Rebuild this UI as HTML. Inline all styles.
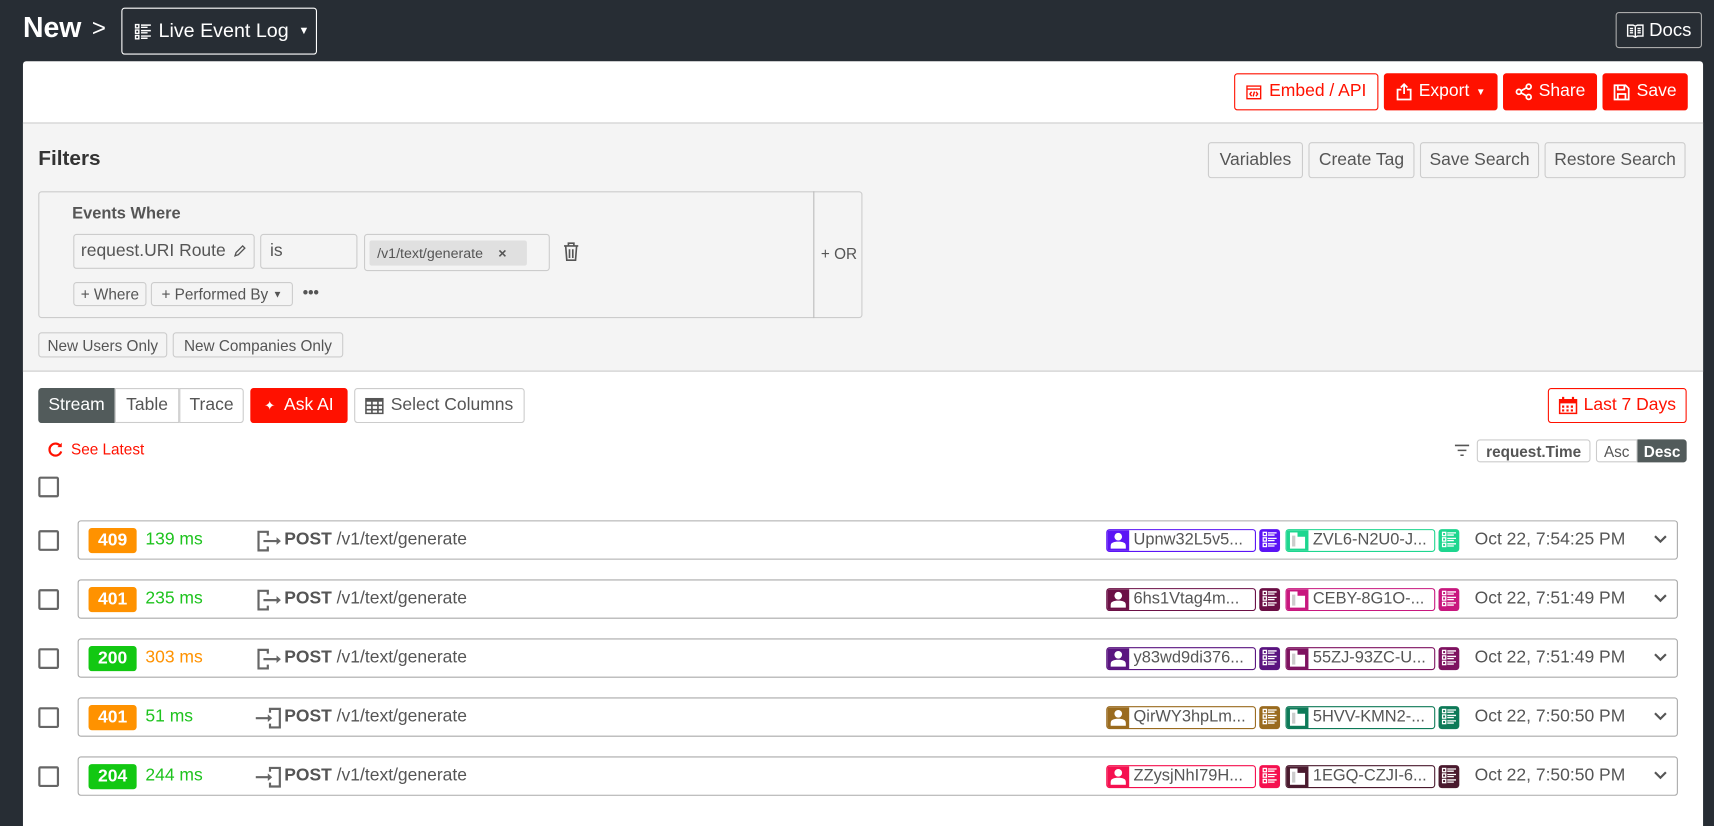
<!DOCTYPE html>
<html><head><meta charset="utf-8"><style>
*{box-sizing:border-box;margin:0;padding:0}
html,body{width:1714px;height:807px;overflow:hidden;background:#272d34;font-family:"Liberation Sans",sans-serif}
#s{position:absolute;left:0;top:0;width:1568px;height:738px;transform:scale(1.09311);transform-origin:0 0}
.a{position:absolute}
.btn{position:absolute;display:flex;align-items:center;justify-content:center;border:1px solid #ccc;border-radius:3px;font-size:16px;color:#555;background:#f4f4f4;white-space:nowrap}
.red{background:#ff1100;color:#fff;border-color:#ff1100}
.ored{background:#fff;color:#ff1100;border-color:#ff1100}
.sm{font-size:14px}
.row{position:absolute;left:71px;width:1464px;height:36px;border:1px solid #aaa;border-radius:3px;background:#fff}
.cb{position:absolute;left:35px;width:19px;height:19px;border:2px solid #666;border-radius:2px;background:#fff}
.badge{position:absolute;left:9px;top:6px;width:44px;height:23px;border-radius:3px;color:#fff;font-size:16px;font-weight:bold;display:flex;align-items:center;justify-content:center}
.ms{position:absolute;left:61px;top:8px;font-size:16px}
.path{position:absolute;left:163px;top:8px;font-size:16px;color:#555}
.chip{position:absolute;top:7px;height:21px;width:137px;border:1.5px solid;border-radius:3px;font-size:15px;color:#555;padding-left:24px;line-height:18px;white-space:nowrap;overflow:hidden}
.chip i{position:absolute;left:0;top:0;width:20px;height:100%}
.chip svg,.li svg{position:absolute;left:3px;top:2px}
.li{position:absolute;top:7px;width:19px;height:21px;border-radius:3px}
.date{position:absolute;left:1277px;top:8px;font-size:16px;color:#555}
.chev{position:absolute;left:1440px;top:9px}
</style></head><body><div id="s">
<svg width="0" height="0" style="position:absolute"><defs>
<symbol id="u" viewBox="0 0 14 15"><circle cx="7" cy="4" r="3.5" fill="#fff"/><path d="M0 15v-2.5C0 9.5 3 8.5 7 8.5s7 1 7 4V15z" fill="#fff"/></symbol>
<symbol id="c" viewBox="0 0 14 15"><path d="M0 0h7v4h7v11H0z" fill="#fff"/><path d="M2 3h3v10H2z" fill="#0003"/></symbol>
<symbol id="l" viewBox="0 0 13 15"><g fill="none" stroke="#fff" stroke-width="1.2"><rect x=".6" y="1" width="3" height="3"/><rect x=".6" y="6" width="3" height="3"/><rect x=".6" y="11" width="3" height="3"/></g><path d="M5 1.5h8M5 3.5h6M5 6.5h8M5 8.5h6M5 11.5h8M5 13.5h6" stroke="#fff" stroke-width="1.2"/></symbol>
</defs></svg>
<div class="a" style="left:21px;top:10px;font-size:26px;font-weight:bold;color:#fff">New</div>
<div class="a" style="left:84px;top:13px;font-size:22px;color:#fff">&gt;</div>
<div class="a" style="left:111px;top:7px;width:179px;height:43px;border:1px solid #fff;border-radius:3px;color:#fff;font-size:18px;display:flex;align-items:center;padding-left:11px">
<svg width="16" height="16" viewBox="0 0 16 16" fill="none" stroke="#fff" stroke-width="1.3"><rect x="1" y="1.5" width="3" height="3"/><rect x="1" y="6.5" width="3" height="3"/><rect x="1" y="11.5" width="3" height="3"/><path d="M6 2h9M6 4h6M6 7h9M6 9h6M6 12h9M6 14h6"/></svg>
<span style="margin-left:6px">Live Event Log</span><span style="margin-left:9px;font-size:10px">▼</span></div>
<div class="a" style="left:1478px;top:11px;width:79px;height:33px;border:1px solid #aaa;border-radius:3px;color:#fff;font-size:17px;display:flex;align-items:center;justify-content:center;gap:5px">
<svg width="16" height="14" viewBox="0 0 16 14" fill="none" stroke="#fff" stroke-width="1.3"><path d="M1 2h5l2 1 2-1h5v10h-5l-2 1-2-1H1zM8 3v10M3 5h3M3 7h3M3 9h3M10 5h3M10 7h3M10 9h3"/></svg>Docs</div>
<div class="a" style="left:21px;top:56px;width:1537px;height:700px;background:#fff;border-radius:3px 3px 0 0"></div>
<div class="a" style="left:21px;top:112px;width:1537px;height:228px;background:#f4f4f4;border-top:1px solid #ccc;border-bottom:1px solid #ccc"></div>
<div class="btn ored" style="left:1129px;top:67px;width:132px;height:34px;gap:7px"><svg width="14" height="13" viewBox="0 0 14 13" fill="none" stroke="#ff1100" stroke-width="1.3"><rect x=".7" y=".7" width="12.6" height="11.6"/><path d="M1 3.5h12M5 6l-1.5 2L5 10M9 6l1.5 2L9 10M7.6 5.8l-1.2 4.4"/></svg>Embed / API</div>
<div class="btn red" style="left:1266px;top:67px;width:104px;height:34px;gap:6px"><svg width="15" height="16" viewBox="0 0 15 16" fill="none" stroke="#fff" stroke-width="1.6"><path d="M5 6H1.5v9h12V6H10M7.5 10V1M4.5 4l3-3 3 3"/></svg>Export<span style="font-size:9px">▼</span></div>
<div class="btn red" style="left:1375px;top:67px;width:86px;height:34px;gap:6px"><svg width="16" height="16" viewBox="0 0 16 16" fill="none" stroke="#fff" stroke-width="1.6"><circle cx="3.5" cy="8" r="2.2"/><circle cx="12.5" cy="3.3" r="2.2"/><circle cx="12.5" cy="12.7" r="2.2"/><path d="M5.5 7l5-2.7M5.5 9l5 2.7"/></svg>Share</div>
<div class="btn red" style="left:1466px;top:67px;width:78px;height:34px;gap:6px"><svg width="15" height="15" viewBox="0 0 15 15" fill="none" stroke="#fff" stroke-width="1.6"><path d="M1 1h10l3 3v10H1zM4 1v4h6V1M4 14V9h7v5"/></svg>Save</div>
<div class="a" style="left:35px;top:135px;font-size:19px;font-weight:bold;color:#333">Filters</div>
<div class="btn" style="left:1105px;top:130px;width:87px;height:33px">Variables</div>
<div class="btn" style="left:1197px;top:130px;width:97px;height:33px">Create Tag</div>
<div class="btn" style="left:1299px;top:130px;width:109px;height:33px">Save Search</div>
<div class="btn" style="left:1413px;top:130px;width:129px;height:33px">Restore Search</div>
<div class="a" style="left:35px;top:175px;width:754px;height:116px;border:1px solid #ccc;border-radius:3px"></div>
<div class="a" style="left:744px;top:175px;width:1px;height:116px;background:#bbb"></div>
<div class="a" style="left:751px;top:224px;font-size:14px;color:#555">+ OR</div>
<div class="a" style="left:66px;top:187px;font-size:15px;font-weight:bold;color:#555">Events Where</div>
<div class="btn" style="left:67px;top:214px;width:166px;height:32px;justify-content:flex-start;padding-left:6px;gap:6px">request.URI Route<svg width="12" height="12" viewBox="0 0 12 12" fill="none" stroke="#555" stroke-width="1.2"><path d="M2 10l1-3 6-6 2 2-6 6zM2 10l3-1"/></svg></div>
<div class="btn" style="left:238px;top:214px;width:89px;height:32px;justify-content:flex-start;padding-left:8px">is</div>
<div class="btn" style="left:333px;top:214px;width:170px;height:34px;justify-content:flex-start;padding-left:4px"><div style="background:#e0e0e0;border-radius:2px;height:23px;width:144px;font-size:13px;display:flex;align-items:center;padding-left:7px">/v1/text/generate<span style="margin-left:14px;font-weight:bold">×</span></div></div>
<svg class="a" style="left:515px;top:221px" width="15" height="18" viewBox="0 0 15 18" fill="none" stroke="#555" stroke-width="1.5"><path d="M1 4h13M5 4V1.5h5V4M2.5 4l1 13h8l1-13M6 7v8M9 7v8"/></svg>
<div class="btn sm" style="left:67px;top:258px;width:67px;height:22px">+ Where</div>
<div class="btn sm" style="left:138px;top:258px;width:130px;height:22px;gap:4px">+ Performed By<span style="font-size:9px">▼</span></div>
<div class="a" style="left:277px;top:259px;font-size:14px;color:#555;font-weight:bold">•••</div>
<div class="btn sm" style="left:35px;top:304px;width:118px;height:23px">New Users Only</div>
<div class="btn sm" style="left:158px;top:304px;width:156px;height:23px">New Companies Only</div>
<div class="btn" style="left:35px;top:355px;width:70px;height:32px;background:#525b5b;color:#fff;border-color:#525b5b;border-radius:3px 0 0 3px">Stream</div>
<div class="btn" style="left:105px;top:355px;width:59px;height:32px;background:#fff;border-radius:0">Table</div>
<div class="btn" style="left:164px;top:355px;width:59px;height:32px;background:#fff;border-radius:0 3px 3px 0">Trace</div>
<div class="btn red" style="left:229px;top:355px;width:89px;height:32px;gap:8px"><span style="font-size:12px">✦</span>Ask AI</div>
<div class="btn" style="left:324px;top:355px;width:156px;height:32px;background:#fff;gap:6px"><svg width="17" height="15" viewBox="0 0 17 15" fill="#555"><path d="M0 0h17v15H0zM1.5 3.5v2.5h4V3.5zm5.5 0v2.5h4V3.5zm5.5 0v2.5h3V3.5zM1.5 7.5V10h4V7.5zm5.5 0V10h4V7.5zm5.5 0V10h3V7.5zM1.5 11.5v2h4v-2zm5.5 0v2h4v-2zm5.5 0v2h3v-2z"/></svg>Select Columns</div>
<div class="btn ored" style="left:1416px;top:355px;width:127px;height:32px;gap:6px"><svg width="17" height="16" viewBox="0 0 17 16" fill="#ff1100"><path d="M0 2h17v14H0zM1.5 6v8.5h14V6zM3 0h2v4H3zM12 0h2v4h-2zM3 8h2v2H3zm4 0h2v2H7zm4 0h2v2h-2zM3 11.5h2v2H3zm4 0h2v2H7zm4 0h2v2h-2z"/></svg>Last 7 Days</div>
<svg class="a" style="left:44px;top:404px" width="14" height="14" viewBox="0 0 14 14" fill="none" stroke="#ff1100" stroke-width="2"><path d="M11.5 4.5A5.5 5.5 0 1 0 12 9"/><path d="M12.5 1v4h-4" fill="#ff1100" stroke="none"/></svg>
<div class="a" style="left:65px;top:403px;font-size:14px;color:#ff1100">See Latest</div>
<svg class="a" style="left:1330px;top:406px" width="15" height="12" viewBox="0 0 15 12" stroke="#555" stroke-width="1.4"><path d="M1 1.5h13M3.5 6h8M6 10.5h3"/></svg>
<div class="btn sm" style="left:1351px;top:402px;width:104px;height:21px;background:#fff;font-weight:bold">request.Time</div>
<div class="btn sm" style="left:1460px;top:402px;width:38px;height:21px;background:#fff;border-radius:3px 0 0 3px">Asc</div>
<div class="btn sm" style="left:1498px;top:402px;width:45px;height:21px;background:#525b5b;color:#fff;border-color:#525b5b;border-radius:0 3px 3px 0;font-weight:bold">Desc</div>
<div class="cb" style="top:436px"></div>

<div class="cb" style="top:485px"></div>
<div class="row" style="top:476px">
<div class="badge" style="background:#ff9200">409</div><div class="ms" style="color:#1ec31e">139 ms</div>
<svg class="a" style="left:163px;top:8px" width="24" height="20" viewBox="0 0 24 20" fill="none" stroke="#666" stroke-width="2"><path d="M10 5V1.5H1.5v17H10V15M6 10h14"/><path d="M18 6.5l4 3.5-4 3.5z" fill="#666" stroke="none"/></svg>
<div class="path" style="left:188px"><b>POST</b> /v1/text/generate</div>
<div class="chip" style="left:940px;border-color:#5b14f5"><i style="background:#5b14f5"></i><svg width="14" height="15"><use href="#u"/></svg>Upnw32L5v5...</div><div class="li" style="left:1080px;background:#5b14f5"><svg width="13" height="15"><use href="#l"/></svg></div>
<div class="chip" style="left:1104px;border-color:#1ed68f"><i style="background:#1ed68f"></i><svg width="14" height="15"><use href="#c"/></svg>ZVL6-N2U0-J...</div><div class="li" style="left:1244px;background:#1ed68f"><svg width="13" height="15"><use href="#l"/></svg></div>
<div class="date">Oct 22, 7:54:25 PM</div><svg class="chev" width="14" height="14" viewBox="0 0 14 14" fill="none" stroke="#555" stroke-width="2"><path d="M2 4.5l5 5 5-5"/></svg></div>

<div class="cb" style="top:539px"></div>
<div class="row" style="top:530px">
<div class="badge" style="background:#ff9200">401</div><div class="ms" style="color:#1ec31e">235 ms</div>
<svg class="a" style="left:163px;top:8px" width="24" height="20" viewBox="0 0 24 20" fill="none" stroke="#666" stroke-width="2"><path d="M10 5V1.5H1.5v17H10V15M6 10h14"/><path d="M18 6.5l4 3.5-4 3.5z" fill="#666" stroke="none"/></svg>
<div class="path" style="left:188px"><b>POST</b> /v1/text/generate</div>
<div class="chip" style="left:940px;border-color:#6b0f45"><i style="background:#6b0f45"></i><svg width="14" height="15"><use href="#u"/></svg>6hs1Vtag4m...</div><div class="li" style="left:1080px;background:#6b0f45"><svg width="13" height="15"><use href="#l"/></svg></div>
<div class="chip" style="left:1104px;border-color:#c8177e"><i style="background:#c8177e"></i><svg width="14" height="15"><use href="#c"/></svg>CEBY-8G1O-...</div><div class="li" style="left:1244px;background:#c8177e"><svg width="13" height="15"><use href="#l"/></svg></div>
<div class="date">Oct 22, 7:51:49 PM</div><svg class="chev" width="14" height="14" viewBox="0 0 14 14" fill="none" stroke="#555" stroke-width="2"><path d="M2 4.5l5 5 5-5"/></svg></div>

<div class="cb" style="top:593px"></div>
<div class="row" style="top:584px">
<div class="badge" style="background:#12c812">200</div><div class="ms" style="color:#ff9200">303 ms</div>
<svg class="a" style="left:163px;top:8px" width="24" height="20" viewBox="0 0 24 20" fill="none" stroke="#666" stroke-width="2"><path d="M10 5V1.5H1.5v17H10V15M6 10h14"/><path d="M18 6.5l4 3.5-4 3.5z" fill="#666" stroke="none"/></svg>
<div class="path" style="left:188px"><b>POST</b> /v1/text/generate</div>
<div class="chip" style="left:940px;border-color:#5a1480"><i style="background:#5a1480"></i><svg width="14" height="15"><use href="#u"/></svg>y83wd9di376...</div><div class="li" style="left:1080px;background:#5a1480"><svg width="13" height="15"><use href="#l"/></svg></div>
<div class="chip" style="left:1104px;border-color:#7e1260"><i style="background:#7e1260"></i><svg width="14" height="15"><use href="#c"/></svg>55ZJ-93ZC-U...</div><div class="li" style="left:1244px;background:#7e1260"><svg width="13" height="15"><use href="#l"/></svg></div>
<div class="date">Oct 22, 7:51:49 PM</div><svg class="chev" width="14" height="14" viewBox="0 0 14 14" fill="none" stroke="#555" stroke-width="2"><path d="M2 4.5l5 5 5-5"/></svg></div>

<div class="cb" style="top:647px"></div>
<div class="row" style="top:638px">
<div class="badge" style="background:#ff9200">401</div><div class="ms" style="color:#1ec31e">51 ms</div>
<svg class="a" style="left:161px;top:8px" width="26" height="20" viewBox="0 0 26 20" fill="none" stroke="#666" stroke-width="2"><path d="M14 5V1.5h9v17h-9V15M1 10h13"/><path d="M12 6.5l4 3.5-4 3.5z" fill="#666" stroke="none"/></svg>
<div class="path" style="left:188px"><b>POST</b> /v1/text/generate</div>
<div class="chip" style="left:940px;border-color:#9a6b1f"><i style="background:#9a6b1f"></i><svg width="14" height="15"><use href="#u"/></svg>QirWY3hpLm...</div><div class="li" style="left:1080px;background:#9a6b1f"><svg width="13" height="15"><use href="#l"/></svg></div>
<div class="chip" style="left:1104px;border-color:#0e7a58"><i style="background:#0e7a58"></i><svg width="14" height="15"><use href="#c"/></svg>5HVV-KMN2-...</div><div class="li" style="left:1244px;background:#0e7a58"><svg width="13" height="15"><use href="#l"/></svg></div>
<div class="date">Oct 22, 7:50:50 PM</div><svg class="chev" width="14" height="14" viewBox="0 0 14 14" fill="none" stroke="#555" stroke-width="2"><path d="M2 4.5l5 5 5-5"/></svg></div>

<div class="cb" style="top:701px"></div>
<div class="row" style="top:692px">
<div class="badge" style="background:#12c812">204</div><div class="ms" style="color:#1ec31e">244 ms</div>
<svg class="a" style="left:161px;top:8px" width="26" height="20" viewBox="0 0 26 20" fill="none" stroke="#666" stroke-width="2"><path d="M14 5V1.5h9v17h-9V15M1 10h13"/><path d="M12 6.5l4 3.5-4 3.5z" fill="#666" stroke="none"/></svg>
<div class="path" style="left:188px"><b>POST</b> /v1/text/generate</div>
<div class="chip" style="left:940px;border-color:#f5104f"><i style="background:#f5104f"></i><svg width="14" height="15"><use href="#u"/></svg>ZZysjNhI79H...</div><div class="li" style="left:1080px;background:#f5104f"><svg width="13" height="15"><use href="#l"/></svg></div>
<div class="chip" style="left:1104px;border-color:#4a1a2e"><i style="background:#4a1a2e"></i><svg width="14" height="15"><use href="#c"/></svg>1EGQ-CZJI-6...</div><div class="li" style="left:1244px;background:#4a1a2e"><svg width="13" height="15"><use href="#l"/></svg></div>
<div class="date">Oct 22, 7:50:50 PM</div><svg class="chev" width="14" height="14" viewBox="0 0 14 14" fill="none" stroke="#555" stroke-width="2"><path d="M2 4.5l5 5 5-5"/></svg></div>
</div></body></html>
